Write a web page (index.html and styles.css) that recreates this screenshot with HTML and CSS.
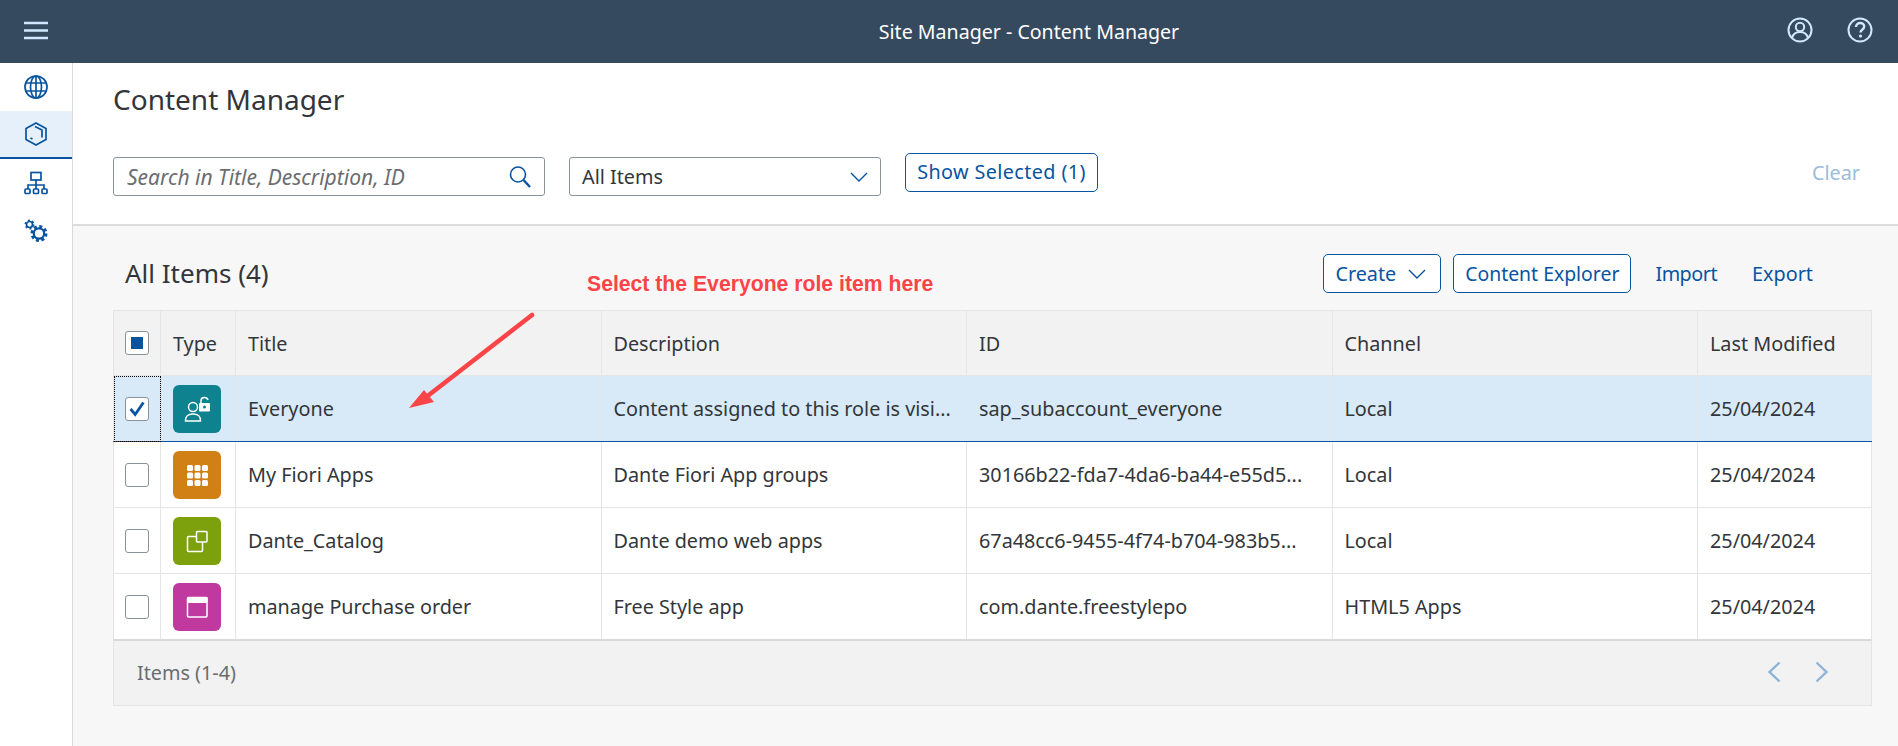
FILE: index.html
```html
<!DOCTYPE html>
<html lang="en">
<head>
    <meta charset="UTF-8">
    <meta name="viewport" content="width=device-width, initial-scale=1.0">
    <title>Site Manager - Content Manager</title>
    <link rel="stylesheet" href="styles.css">
</head>
<body>
    <div class="shell-bar">
        <svg viewBox="0 0 24 24" class="shell-menu">
            <path d="M0 3h24M0 10.500h24M0 18h24" stroke="#d1e8ff" stroke-width="2.600" fill="none"/>
        </svg>
        <div class="shell-title">Site Manager - Content Manager</div>
        <div class="shell-actions">
            <svg viewBox="0 0 26 26" class="shell-icon">
                <circle cx="13" cy="13" r="11.500" stroke="#d1e8ff" stroke-width="2" fill="none"/>
                <circle cx="13" cy="10" r="4.200" stroke="#d1e8ff" stroke-width="2" fill="none"/>
                <path d="M5 21c1-4 4-6 8-6s7 2 8 6" stroke="#d1e8ff" stroke-width="2" fill="none"/>
            </svg>
            <svg viewBox="0 0 26 26" class="shell-icon">
                <circle cx="13" cy="13" r="11.500" stroke="#d1e8ff" stroke-width="2" fill="none"/>
                <path d="M9 10c0-2.500 2-4 4.200-4s4 1.500 4 3.600c0 3-3.700 3-3.700 5.900" stroke="#d1e8ff" stroke-width="2.400" fill="none"/>
                <circle cx="13.500" cy="19" r="1.600" fill="#d1e8ff"/>
            </svg>
        </div>
    </div>

    <div class="layout">
        <div class="side-nav">
            <div class="side-item">
                <svg viewBox="0 0 24 24" class="side-icon">
                    <circle cx="12" cy="12" r="11"/>
                    <ellipse cx="12" cy="12" rx="5.500" ry="11"/>
                    <path d="M1.500 8h21M1.500 16h21M12 1v22"/>
                </svg>
            </div>
            <div class="side-item selected">
                <svg viewBox="0 0 24 24" class="side-icon">
                    <path d="M12 1l10 5.500v11L12 23 2 17.500v-11z"/>
                    <path d="M11 4.500l7 3.500v7.500M6.500 16l2 1"/>
                </svg>
            </div>
            <div class="side-item">
                <svg viewBox="0 0 24 24" class="side-icon">
                    <rect x="7" y="1.500" width="10" height="7.500"/>
                    <path d="M12 9v5M4 18v-4h16v4M12 14v4"/>
                    <rect x="1" y="18" width="5" height="4.500" rx="1"/>
                    <rect x="9.500" y="18" width="5" height="4.500" rx="1"/>
                    <rect x="18" y="18" width="5" height="4.500" rx="1"/>
                </svg>
            </div>
            <div class="side-item">
                <svg viewBox="0 0 24 24" class="side-icon">
                    <circle cx="5.500" cy="5.500" r="3"/>
                    <circle cx="5.500" cy="5.500" r="4" stroke-width="2" stroke-dasharray="2 2.190"/>
                    <circle cx="15" cy="14.500" r="5.200" stroke-width="2.200"/>
                    <circle cx="15" cy="14.500" r="7" stroke-width="3" stroke-dasharray="3 2.500"/>
                </svg>
            </div>
        </div>

        <div class="content">
            <div class="page-head">
                <div class="page-title">Content Manager</div>
                <div class="filter-row">
                    <div class="field search-field">
                        <span class="placeholder">Search in Title, Description, ID</span>
                        <svg viewBox="0 0 24 24" class="field-icon">
                            <circle cx="10" cy="9.500" r="7.500" stroke="#0854a0" stroke-width="1.600" fill="none"/>
                            <path d="M15.500 15l6.500 7" stroke="#0854a0" stroke-width="2.400" fill="none"/>
                        </svg>
                    </div>
                    <div class="field select-field">
                        <span>All Items</span>
                        <svg viewBox="0 0 18 10" class="chevron">
                            <path d="M1 1l8 8 8-8" stroke="#0854a0" stroke-width="1.400" fill="none"/>
                        </svg>
                    </div>
                    <button class="button selected-button">Show Selected (1)</button>
                    <div class="clear-link">Clear</div>
                </div>
            </div>

            <div class="section">
                <div class="annotation">Select the Everyone role item here</div>
                <svg viewBox="0 0 140 100" class="annotation-arrow">
                    <path d="M124 4L17 87" stroke="#fb4447" stroke-width="4.600" stroke-linecap="round" fill="none"/>
                    <path d="M1 97l15-18 10 12z" fill="#fb4447"/>
                </svg>

                <div class="toolbar">
                    <div class="table-title">All Items (4)</div>
                    <div class="toolbar-actions">
                        <button class="button create-button">Create
                            <svg viewBox="0 0 18 10" class="chevron">
                                <path d="M1 1l8 8 8-8" stroke="#0854a0" stroke-width="1.400" fill="none"/>
                            </svg>
                        </button>
                        <button class="button explorer-button">Content Explorer</button>
                        <a class="link-button import-link">Import</a>
                        <a class="link-button">Export</a>
                    </div>
                </div>

                <table class="items">
                    <colgroup>
                        <col class="col-check">
                        <col class="col-type">
                        <col class="col-wide">
                        <col class="col-wide">
                        <col class="col-wide">
                        <col class="col-wide">
                        <col>
                    </colgroup>
                    <thead>
                        <tr>
                            <th class="check-cell"><span class="checkbox"><span class="partial"></span></span></th>
                            <th>Type</th>
                            <th>Title</th>
                            <th>Description</th>
                            <th>ID</th>
                            <th>Channel</th>
                            <th>Last Modified</th>
                        </tr>
                    </thead>
                    <tbody>
                        <tr class="row-selected">
                            <td class="check-cell focused">
                                <span class="checkbox">
                                    <svg viewBox="0 0 24 24" class="tick"><path d="M5 12l5 6 9-13" stroke="#0854a0" stroke-width="3" fill="none"/></svg>
                                </span>
                            </td>
                            <td>
                                <div class="tile teal">
                                    <svg viewBox="0 0 48 48">
                                        <circle cx="20" cy="22" r="4.500" stroke="#fff" stroke-width="1.500" fill="none"/>
                                        <path d="M12.500 36c0-4 1-7 7.500-7s7.500 3 7.500 7z" stroke="#fff" stroke-width="1.500" fill="none"/>
                                        <path d="M28 18v-2.500c0-4 6-4 7-.5" stroke="#fff" stroke-width="1.500" fill="none"/>
                                        <rect x="26" y="18" width="11" height="8.500" rx="1" fill="#fff"/>
                                        <circle cx="31.500" cy="22" r="1.500" fill="#0f828f"/>
                                    </svg>
                                </div>
                            </td>
                            <td>Everyone</td>
                            <td>Content assigned to this role is visi...</td>
                            <td>sap_subaccount_everyone</td>
                            <td>Local</td>
                            <td>25/04/2024</td>
                        </tr>
                        <tr>
                            <td class="check-cell"><span class="checkbox"></span></td>
                            <td>
                                <div class="tile orange">
                                    <svg viewBox="0 0 48 48" fill="#fff">
                                        <rect x="14" y="14" width="6" height="6" rx="1.500"/>
                                        <rect x="21.500" y="14" width="6" height="6" rx="1.500"/>
                                        <rect x="29" y="14" width="6" height="6" rx="1.500"/>
                                        <rect x="14" y="21.500" width="6" height="6" rx="1.500"/>
                                        <rect x="21.500" y="21.500" width="6" height="6" rx="1.500"/>
                                        <rect x="29" y="21.500" width="6" height="6" rx="1.500"/>
                                        <rect x="14" y="29" width="6" height="6" rx="1.500"/>
                                        <rect x="21.500" y="29" width="6" height="6" rx="1.500"/>
                                        <rect x="29" y="29" width="6" height="6" rx="1.500"/>
                                    </svg>
                                </div>
                            </td>
                            <td>My Fiori Apps</td>
                            <td>Dante Fiori App groups</td>
                            <td>30166b22-fda7-4da6-ba44-e55d5...</td>
                            <td>Local</td>
                            <td>25/04/2024</td>
                        </tr>
                        <tr>
                            <td class="check-cell"><span class="checkbox"></span></td>
                            <td>
                                <div class="tile green">
                                    <svg viewBox="0 0 48 48">
                                        <rect x="14.500" y="19.500" width="15" height="15" rx="1" stroke="#fff" stroke-width="1.500" fill="none"/>
                                        <rect x="23.500" y="14.500" width="10.500" height="10.500" rx="1" stroke="#fff" stroke-width="1.500" fill="#7ca10c"/>
                                    </svg>
                                </div>
                            </td>
                            <td>Dante_Catalog</td>
                            <td>Dante demo web apps</td>
                            <td>67a48cc6-9455-4f74-b704-983b5...</td>
                            <td>Local</td>
                            <td>25/04/2024</td>
                        </tr>
                        <tr>
                            <td class="check-cell"><span class="checkbox"></span></td>
                            <td>
                                <div class="tile magenta">
                                    <svg viewBox="0 0 48 48">
                                        <rect x="14.500" y="14.500" width="19.500" height="19.500" rx="1" stroke="#fff" stroke-width="1.500" fill="none"/>
                                        <rect x="14" y="14" width="20.500" height="6" fill="#fff"/>
                                    </svg>
                                </div>
                            </td>
                            <td>manage Purchase order</td>
                            <td>Free Style app</td>
                            <td>com.dante.freestylepo</td>
                            <td>HTML5 Apps</td>
                            <td>25/04/2024</td>
                        </tr>
                    </tbody>
                </table>

                <div class="table-footer">
                    <div class="items-count">Items (1-4)</div>
                    <div class="pager">
                        <svg viewBox="0 0 14 22" class="pager-icon"><path d="M12.500 1.500L2.500 11l10 9.500" stroke="#8fb4d8" stroke-width="2.400" fill="none"/></svg>
                        <svg viewBox="0 0 14 22" class="pager-icon"><path d="M1.500 1.500l10 9.500-10 9.500" stroke="#8fb4d8" stroke-width="2.400" fill="none"/></svg>
                    </div>
                </div>
            </div>
        </div>
    </div>
</body>
</html>
```

FILE: styles.css
```css
html, body {
    height: 100%;
    margin: 0;
    font-family: "Noto Sans", Arial, sans-serif;
    background-color: #f7f7f7;
    color: #32363a;
    overflow: hidden;
}
.shell-bar {
    height: 63px;
    background-color: #354a5f;
    display: flex;
    align-items: center;
    justify-content: center;
    padding-left: 160px;
    position: relative;
}
.shell-menu {
    position: absolute;
    left: 24px;
    top: 20px;
    width: 24px;
    height: 24px;
}
.shell-title {
    color: #ffffff;
    font-size: 19.600px;
}
.shell-actions {
    position: absolute;
    right: 25px;
    top: 17px;
    display: flex;
    gap: 34px;
}
.shell-icon {
    width: 26px;
    height: 26px;
    display: block;
}
.layout {
    display: flex;
    height: 683px;
}
.side-nav {
    width: 72px;
    background-color: #ffffff;
    border-right: 1px solid #d9d9d9;
}
.side-item {
    height: 48px;
    display: flex;
    align-items: center;
    justify-content: center;
    box-sizing: border-box;
}
.side-item.selected {
    background-color: #e5f0fa;
    border-bottom: 2px solid #0854a0;
}
.side-icon {
    width: 24px;
    height: 24px;
    fill: none;
    stroke: #0854a0;
    stroke-width: 1.700;
}
.content {
    flex: 1;
    min-width: 0;
}
.page-head {
    height: 163px;
    box-sizing: border-box;
    background-color: #ffffff;
    border-bottom: 2px solid #dcdcdc;
    padding: 16px 38px 0 40px;
}
.page-title {
    font-size: 28px;
    line-height: 40px;
}
.filter-row {
    display: flex;
    align-items: flex-start;
    margin-top: 34px;
}
.field {
    height: 39px;
    margin-top: 4px;
    box-sizing: border-box;
    background-color: #ffffff;
    border: 1px solid #89919a;
    border-radius: 3px;
    display: flex;
    align-items: center;
    justify-content: space-between;
    padding: 0 12px;
    font-size: 19.800px;
}
.search-field {
    width: 432px;
    margin-right: 24px;
}
.select-field {
    width: 312px;
    margin-right: 24px;
}
.placeholder {
    font-size: 21px;
    font-style: italic;
    color: #6a6d70;
    margin-left: 1px;
}
.field-icon {
    width: 24px;
    height: 24px;
}
.chevron {
    width: 18px;
    height: 10px;
}
.button {
    height: 39px;
    padding: 0 11px;
    background-color: #ffffff;
    color: #0854a0;
    border: 1px solid #0854a0;
    border-radius: 5px;
    font-family: inherit;
    font-size: 19.800px;
}
.selected-button {
    width: 193px;
    padding: 0 0 2px;
    letter-spacing: .4px;
}
.clear-link {
    margin-left: auto;
    height: 39px;
    line-height: 39px;
    font-size: 19.800px;
    color: #9cbbdb;
}
.section {
    position: relative;
    padding: 28px 26px 0 40px;
}
.annotation {
    position: absolute;
    left: 514px;
    top: 46px;
    font-family: "Liberation Sans", Arial, sans-serif;
    font-size: 21.200px;
    font-weight: bold;
    color: #fb4447;
}
.annotation-arrow {
    position: absolute;
    left: 335px;
    top: 85px;
    width: 140px;
    height: 100px;
    z-index: 2;
}
.toolbar {
    display: flex;
    align-items: center;
    justify-content: space-between;
    margin-bottom: 17px;
}
.table-title {
    font-size: 26px;
    padding-left: 12px;
    padding-bottom: 2px;
}
.toolbar-actions {
    display: flex;
    align-items: center;
    gap: 12px;
    padding-right: 59px;
}
.create-button {
    display: flex;
    align-items: center;
    gap: 12px;
    padding-right: 14px;
}
.explorer-button {
    font-size: 19.400px;
}
.link-button {
    color: #0854a0;
    font-size: 19.800px;
    margin-left: 12px;
}
.import-link {
    letter-spacing: -.5px;
    margin-right: 11px;
}
.items {
    width: 1759px;
    table-layout: fixed;
    border-collapse: collapse;
    background-color: #ffffff;
    font-size: 19.800px;
}
.col-check {
    width: 47px;
}
.col-type {
    width: 75px;
}
.col-wide {
    width: 365.500px;
}
.items th {
    height: 65px;
    box-sizing: border-box;
    background-color: #f2f2f2;
    border: 1px solid #e5e5e5;
    font-weight: normal;
    text-align: left;
    padding: 0 12px;
}
.items td {
    height: 66px;
    box-sizing: border-box;
    border: 1px solid #e5e5e5;
    padding: 0 12px;
    white-space: nowrap;
}
.items .check-cell {
    padding: 0 11px;
}
.items .row-selected td {
    background-color: #d8e9f7;
    border-color: #d8e9f7 #e5e5e5 #0854a0 #e5e5e5;
}
.items .focused {
    outline: 1px dotted #000000;
    outline-offset: -1px;
}
.checkbox {
    width: 24px;
    height: 24px;
    box-sizing: border-box;
    background-color: #ffffff;
    border: 1px solid #89919a;
    border-radius: 3px;
    display: flex;
    align-items: center;
    justify-content: center;
}
.partial {
    width: 12px;
    height: 12px;
    background-color: #0854a0;
}
.tick {
    width: 22px;
    height: 22px;
}
.tile {
    width: 48px;
    height: 48px;
    border-radius: 6px;
}
.tile svg {
    display: block;
}
.teal {
    background-color: #0f828f;
}
.orange {
    background-color: #d08014;
}
.green {
    background-color: #7ca10c;
}
.magenta {
    background-color: #c0399f;
}
.table-footer {
    width: 1759px;
    height: 67px;
    margin-top: -1px;
    box-sizing: border-box;
    background-color: #f2f2f2;
    border: 1px solid #e5e5e5;
    border-top: 2px solid #d9d9d9;
    display: flex;
    align-items: center;
    justify-content: space-between;
    padding: 0 42px 2px 23px;
}
.items-count {
    font-size: 19.800px;
    color: #6a6d70;
}
.pager {
    display: flex;
    gap: 34px;
}
.pager-icon {
    width: 14px;
    height: 22px;
    display: block;
}
```
